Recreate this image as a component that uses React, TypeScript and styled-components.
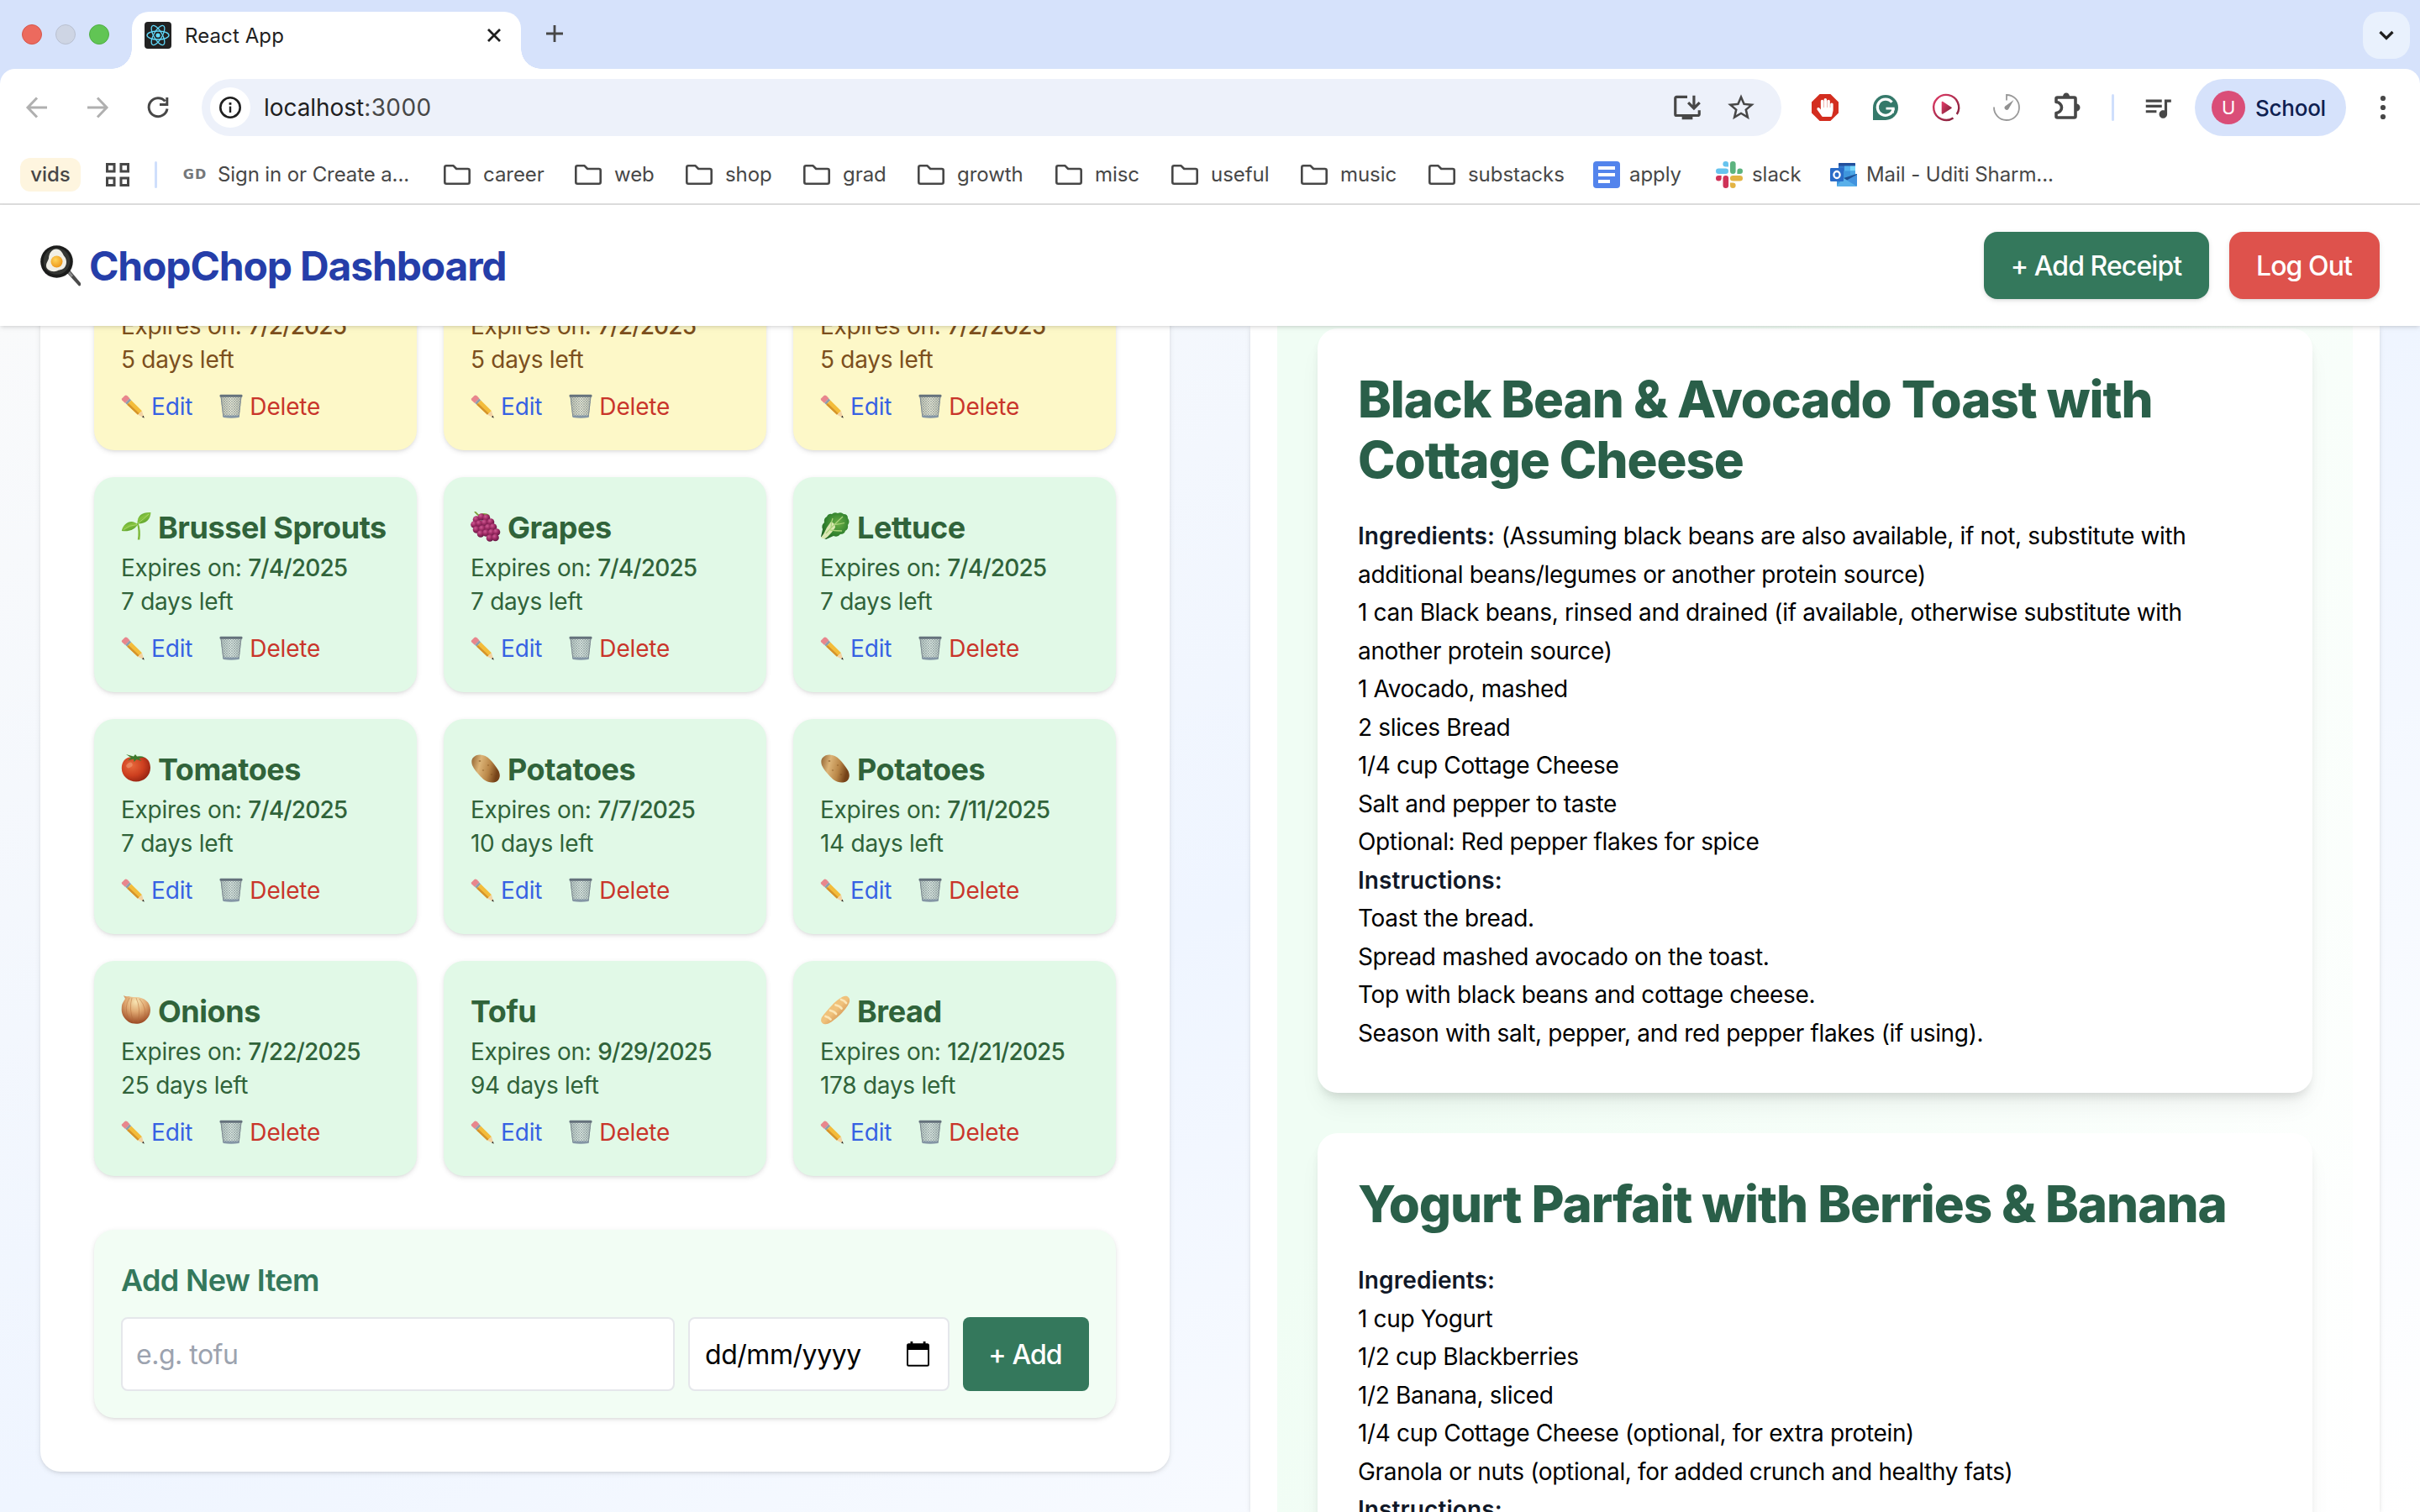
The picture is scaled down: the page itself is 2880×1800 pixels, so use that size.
import React from "react";
import styled, { createGlobalStyle } from "styled-components";
import { MdInstallDesktop, MdQueueMusic, MdStarBorder } from "react-icons/md";
import { FaHandPaper } from "react-icons/fa";

const GlobalStyle = createGlobalStyle`
  * { box-sizing: border-box; }
  body { margin: 0; background: #fff; }
  h1, h2, h3, p { margin: 0; }
  button, input { font-family: inherit; }
`;

const Window = styled.div`
  width: 2880px;
  height: 1800px;
  overflow: hidden;
  display: flex;
  flex-direction: column;
  background: #fff;
  font-family: "Inter", "Liberation Sans", sans-serif;
`;

/* ---------- Tab strip ---------- */

const TabStrip = styled.div`
  flex: none;
  height: 82px;
  display: flex;
  align-items: flex-start;
  padding: 14px 12px 0 26px;
  background: #d6e2fb;
`;

const TrafficLights = styled.div`
  display: flex;
  gap: 16px;
  margin-top: 15px;
`;

const Light = styled.span<{ $fill: string; $edge: string }>`
  width: 24px;
  height: 24px;
  border-radius: 50%;
  background: ${(p) => p.$fill};
  border: 1px solid ${(p) => p.$edge};
`;

const Tab = styled.div`
  position: relative;
  width: 463px;
  height: 68px;
  margin-left: 27px;
  padding: 0 16px 12px 15px;
  display: flex;
  align-items: center;
  border-radius: 20px 20px 0 0;
  background: #fff;

  &::before,
  &::after {
    content: "";
    position: absolute;
    bottom: 0;
    width: 24px;
    height: 24px;
  }
  &::before {
    left: -24px;
    background: radial-gradient(circle at 0 0, transparent 23.5px, #fff 24px);
  }
  &::after {
    right: -24px;
    background: radial-gradient(circle at 100% 0, transparent 23.5px, #fff 24px);
  }
`;

const TabTitle = styled.span`
  flex: 1;
  margin-left: 16px;
  font-size: 24px;
  letter-spacing: 0.1px;
  color: #1f1f1f;
`;

const NewTab = styled.div`
  display: flex;
  margin: 12px 0 0 26px;
`;

const TabSearch = styled.div`
  margin-left: auto;
  width: 56px;
  height: 56px;
  border-radius: 20px;
  background: #e9f1fd;
  display: flex;
  align-items: center;
  justify-content: center;
`;

/* ---------- Toolbar ---------- */

const ToolbarBackdrop = styled.div`
  flex: none;
  background: #d6e2fb;
`;

const Toolbar = styled.div`
  height: 92px;
  display: flex;
  align-items: center;
  padding: 0 24px;
  border-radius: 18px 18px 0 0;
  background: #fff;
`;

const IconGroup = styled.div`
  display: flex;
  gap: 32px;
  align-items: center;
`;

const AddressBar = styled.div`
  width: 1880px;
  height: 68px;
  margin: 0 32px;
  padding: 0 29px 0 10px;
  border-radius: 34px;
  background: #edf1fa;
  display: flex;
  align-items: center;
  color: #474747;
`;

const SiteInfo = styled.span`
  width: 48px;
  height: 48px;
  border-radius: 50%;
  background: #fff;
  display: flex;
  align-items: center;
  justify-content: center;
`;

const Url = styled.span`
  flex: 1;
  margin-left: 16px;
  font-size: 28px;
  letter-spacing: -0.05px;
  color: #1f1f1f;
`;

const Port = styled.span`
  color: #474747;
  letter-spacing: 0.4px;
`;

const AddressActions = styled.span`
  display: flex;
  gap: 26px;
`;

const Divider = styled.span<{ $margin: string }>`
  width: 3px;
  height: 32px;
  border-radius: 2px;
  margin: ${(p) => p.$margin};
  background: #cfdffc;
`;

const Profile = styled.div`
  width: 180px;
  height: 68px;
  margin: 0 24px 0 25px;
  padding-left: 20px;
  border-radius: 34px;
  background: #d6e2fb;
  display: flex;
  align-items: center;
  gap: 12px;
  font-size: 26px;
  font-weight: 500;
  letter-spacing: -0.25px;
  color: #0e2050;
`;

const Avatar = styled.span`
  width: 40px;
  height: 40px;
  border-radius: 50%;
  background: #da4e78;
  color: #fff;
  display: flex;
  align-items: center;
  justify-content: center;
  font-size: 22px;
  font-weight: 400;
`;

/* ---------- Bookmarks ---------- */

const BookmarksBar = styled.div`
  flex: none;
  height: 70px;
  display: flex;
  align-items: center;
  padding: 0 0 1px 24px;
  border-bottom: 2px solid #dfdfdf;
  color: #474747;
  font-size: 24px;
`;

const GroupChip = styled.span`
  width: 72px;
  height: 40px;
  border-radius: 12px;
  background: #fef5df;
  display: flex;
  align-items: center;
  justify-content: center;
  font-weight: 500;
  margin-right: 30px;
`;

const Bookmark = styled.span<{ $width: number; $gap?: number; $spacing?: number }>`
  width: ${(p) => p.$width}px;
  display: flex;
  align-items: center;
  gap: ${(p) => p.$gap ?? 15}px;
  letter-spacing: ${(p) => p.$spacing ?? -0.05}px;
  white-space: nowrap;
  svg { flex: none; }
`;

const Monogram = styled.span`
  width: 34px;
  font-family: "DejaVu Sans", sans-serif;
  font-size: 16px;
  font-weight: 700;
  letter-spacing: 1px;
  text-align: center;
  color: #74777a;
`;

/* ---------- App header ---------- */

const Header = styled.header`
  position: relative;
  z-index: 1;
  flex: none;
  height: 144px;
  display: flex;
  align-items: center;
  justify-content: space-between;
  padding: 0 48px;
  background: #fff;
  box-shadow: 0 2px 6px rgba(0, 0, 0, 0.1), 0 2px 4px -2px rgba(0, 0, 0, 0.12);
`;

const Brand = styled.h1`
  display: flex;
  align-items: center;
  gap: 10px;
  font-size: 48px;
  font-weight: 700;
  letter-spacing: -1.17px;
  color: #253ea9;
`;

const HeaderActions = styled.div`
  display: flex;
  gap: 24px;
`;

const HeaderButton = styled.button<{ $color: string; $width: number }>`
  width: ${(p) => p.$width}px;
  height: 80px;
  padding: 0 1px 0 0;
  border: 0;
  border-radius: 16px;
  background: ${(p) => p.$color};
  color: #fff;
  font-size: 32px;
  font-weight: 500;
  letter-spacing: -0.93px;
  box-shadow: 0 2px 6px rgba(0, 0, 0, 0.1), 0 2px 4px -2px rgba(0, 0, 0, 0.1);
`;

/* ---------- Page body ---------- */

const Main = styled.main`
  flex: 1;
  min-height: 0;
  overflow: hidden;
  display: flex;
  gap: 96px;
  padding: 0 48px;
  background: linear-gradient(to bottom right, #f9fafb, #eff5ff 50%, #ffffff);
`;

const PantryColumn = styled.section`
  width: 1344px;
  display: flex;
  flex-direction: column;
  justify-content: flex-end;
  padding-bottom: 48px;
`;

const Pantry = styled.div`
  flex: none;
  display: flex;
  flex-direction: column;
  gap: 64px;
  padding: 64px;
  border-radius: 24px;
  background: #fff;
  box-shadow: 0 2px 6px rgba(0, 0, 0, 0.1), 0 2px 4px -2px rgba(0, 0, 0, 0.1);
`;

const ItemGrid = styled.div`
  display: grid;
  grid-template-columns: repeat(3, 1fr);
  grid-auto-rows: 256px;
  gap: 32px;
`;

const ItemCard = styled.article<{ $soon?: boolean }>`
  display: flex;
  flex-direction: column;
  justify-content: flex-end;
  padding: 32px;
  border-radius: 24px;
  background: ${(p) => (p.$soon ? "#fdf8c8" : "#e1f9e7")};
  color: ${(p) => (p.$soon ? "#7c4f1d" : "#30633a")};
  box-shadow: 0 2px 6px rgba(0, 0, 0, 0.1), 0 2px 4px -2px rgba(0, 0, 0, 0.1);
`;

const ItemName = styled.h3`
  display: flex;
  align-items: center;
  gap: 8px;
  font-size: 36px;
  line-height: 56px;
  font-weight: 700;
  letter-spacing: -0.45px;
  white-space: nowrap;
  svg { margin-bottom: 3px; }
`;

const ItemLine = styled.p`
  font-size: 28px;
  line-height: 40px;
  letter-spacing: -0.27px;
  white-space: nowrap;
`;

const ExpiryDate = styled.span`
  font-weight: 500;
  letter-spacing: -0.85px;
`;

const ItemActions = styled.div`
  display: flex;
  gap: 32px;
  margin-top: 16px;
`;

const ItemAction = styled.span<{ $color: string }>`
  display: flex;
  align-items: center;
  gap: 8px;
  font-size: 28px;
  line-height: 40px;
  letter-spacing: -0.15px;
  color: ${(p) => p.$color};
  svg { margin-bottom: 1px; }
`;

const AddItem = styled.form`
  padding: 32px;
  border-radius: 24px;
  background: #f2fdf4;
  box-shadow: 0 2px 6px rgba(0, 0, 0, 0.1), 0 2px 4px -2px rgba(0, 0, 0, 0.1);
`;

const AddItemTitle = styled.h3`
  font-size: 36px;
  line-height: 56px;
  font-weight: 600;
  letter-spacing: -0.65px;
  color: #34785c;
  margin-bottom: 16px;
`;

const AddItemRow = styled.div`
  display: flex;
  gap: 16px;
  height: 88px;
`;

const NameInput = styled.input`
  flex: 1;
  min-width: 0;
  padding: 0 16px;
  border: 2px solid #e5e7eb;
  border-radius: 8px;
  background: #fff;
  font-size: 32px;
  letter-spacing: -0.5px;
  &::placeholder { color: #9ca3af; opacity: 1; }
`;

const DateInput = styled.div`
  width: 311px;
  padding: 0 22px 0 18px;
  border: 2px solid #e5e7eb;
  border-radius: 8px;
  background: #fff;
  display: flex;
  align-items: center;
  justify-content: space-between;
  font-size: 32px;
  letter-spacing: -0.45px;
  color: #000;
`;

const AddButton = styled.button`
  width: 150px;
  padding: 0 2px 0 0;
  border: 0;
  border-radius: 8px;
  background: #34785c;
  color: #fff;
  font-size: 32px;
  font-weight: 500;
  letter-spacing: -0.9px;
`;

/* ---------- Recipes ---------- */

const RecipePanel = styled.section`
  width: 1344px;
  padding: 0 32px;
  background: #fff;
  box-shadow: 0 2px 6px rgba(0, 0, 0, 0.1), 0 2px 4px -2px rgba(0, 0, 0, 0.1);
`;

const RecipeList = styled.div`
  height: 100%;
  overflow: hidden;
  display: flex;
  flex-direction: column;
  gap: 48px;
  padding: 3px 48px 0;
  background: linear-gradient(115deg, #f0fdf4 28%, #ffffff 100%);
`;

const RecipeCard = styled.article`
  flex: none;
  padding: 48px;
  border-radius: 24px;
  background: #fff;
  box-shadow: 0 20px 30px -6px rgba(0, 0, 0, 0.06), 0 8px 12px -4px rgba(0, 0, 0, 0.12);
`;

const RecipeTitle = styled.h2`
  font-size: 60px;
  line-height: 72px;
  font-weight: 800;
  letter-spacing: -1.06px;
  color: #2a5f49;
  margin-bottom: 33px;
`;

const RecipeLine = styled.p`
  font-size: 28px;
  line-height: 45.5px;
  letter-spacing: -0.34px;
  color: #000;
  white-space: nowrap;
`;

const RecipeLabel = styled.strong`
  font-weight: 600;
  letter-spacing: 0.1px;
  color: #111827;
`;

/* ---------- Chrome icons ---------- */

const ReactIcon = () => (
  <svg width="32" height="32" viewBox="0 0 32 32">
    <rect width="32" height="32" rx="4" fill="#222" />
    <g fill="none" stroke="#61dafb" strokeWidth="1.3">
      <ellipse cx="16" cy="16" rx="13" ry="5" />
      <ellipse cx="16" cy="16" rx="13" ry="5" transform="rotate(60 16 16)" />
      <ellipse cx="16" cy="16" rx="13" ry="5" transform="rotate(120 16 16)" />
    </g>
    <circle cx="16" cy="16" r="2.6" fill="#61dafb" />
  </svg>
);

const StrokeIcon = ({ d, size = 40, width = 3, color = "#474747" }: { d: string; size?: number; width?: number; color?: string }) => (
  <svg width={size} height={size} viewBox={`0 0 ${size} ${size}`} fill="none" stroke={color} strokeWidth={width}>
    <path d={d} />
  </svg>
);

const InfoIcon = () => (
  <svg width="28" height="28" viewBox="0 0 28 28">
    <circle cx="14" cy="14" r="11.7" fill="none" stroke="#1f1f1f" strokeWidth="2.6" />
    <rect x="12.8" y="12.6" width="2.4" height="7.4" fill="#1f1f1f" />
    <rect x="12.6" y="8" width="2.8" height="2.8" fill="#1f1f1f" />
  </svg>
);

const BlockSign = styled.span`
  width: 32px;
  height: 32px;
  margin: 0 4px;
  display: flex;
  align-items: center;
  justify-content: center;
  color: #fff;
  background: #d32d1f;
  clip-path: polygon(30% 0, 70% 0, 100% 30%, 100% 70%, 70% 100%, 30% 100%, 0 70%, 0 30%);
`;

const GrammarIcon = () => (
  <svg width="40" height="40" viewBox="0 0 40 40">
    <path d="M5 35V20a15 15 0 1 1 15 15z" fill="#35796a" />
    <path d="M27.5 13.8A9.6 9.6 0 1 0 29.4 21.4" fill="none" stroke="#fff" strokeWidth="3.2" />
    <path d="M20.5 21.2h10.2M28.4 21v5.8" fill="none" stroke="#fff" strokeWidth="2.8" />
  </svg>
);

const PlayIcon = () => (
  <svg width="40" height="40" viewBox="0 0 40 40">
    <path d="M28.5 32.4A15 15 0 1 1 32.8 28" stroke="url(#play)" strokeWidth="2.4" fill="none" />
    <path d="M15.500 13.500v13.500l10.500-6.700z" fill="url(#play)" stroke="url(#play)" strokeWidth="1.6" strokeLinejoin="round" />
  </svg>
);

const TimerIcon = () => (
  <svg width="40" height="40" viewBox="0 0 40 40">
    <path d="M5 19.5A15 15 0 1 0 20 5v6.5" fill="none" stroke="#999" strokeWidth="1.8" />
    <path d="M28.5 11 18.2 18.6a2.6 2.6 0 1 0 4 3.4z" fill="#919191" />
  </svg>
);

const PuzzleIcon = () => (
  <svg width="40" height="40" viewBox="0 0 40 40">
    <path
      d="M8.500 8h20q1.500 0 1.500 1.500v21q0 1.500-1.500 1.500h-20q-1.500 0-1.500-1.500V26.500a6.500 6.500 0 0 0 0-13V9.500Q7 8 8.500 8z"
      fill="none"
      stroke="#474747"
      strokeWidth="3.600"
      strokeLinejoin="round"
    />
    <path d="M15 7a4 4.500 0 0 1 8 0zM31 15.500a4.500 4.500 0 0 1 0 9z" fill="#474747" />
  </svg>
);

const KebabIcon = () => (
  <svg width="40" height="40" viewBox="0 0 40 40" fill="#474747">
    <circle cx="20" cy="9" r="3.100" />
    <circle cx="20" cy="20" r="3.100" />
    <circle cx="20" cy="31" r="3.100" />
  </svg>
);

const GridIcon = () => (
  <svg width="28" height="28" viewBox="0 0 28 28" fill="none" stroke="#474747" strokeWidth="3">
    <rect x="1.500" y="1.500" width="8.500" height="8.500" />
    <rect x="18" y="1.500" width="8.500" height="8.500" />
    <rect x="1.500" y="18" width="8.500" height="8.500" />
    <rect x="18" y="18" width="8.500" height="8.500" />
  </svg>
);

const FolderIcon = () => (
  <svg width="32" height="32" viewBox="0 0 32 32" fill="none" stroke="#474747" strokeWidth="2.600" strokeLinejoin="round">
    <path d="M3.300 5.300H11.600L15.200 9H28.700Q30.700 9 30.700 11V24.700Q30.700 26.700 28.700 26.700H3.300Q1.300 26.700 1.300 24.700V7.300Q1.300 5.300 3.300 5.300z" />
  </svg>
);

const DocsIcon = () => (
  <svg width="32" height="32" viewBox="0 0 32 32">
    <rect width="32" height="32" rx="4" fill="#5384ec" />
    <path d="M6 8h20M6 16h20M6 24h14" stroke="#fff" strokeWidth="3.800" />
  </svg>
);

const SlackIcon = () => (
  <svg width="32" height="32" viewBox="0 0 32 32">
    <g fill="#66c3ee">
      <path d="M15 6.600h-3.300A3.300 3.300 0 1 1 15 3.300z" />
      <rect y="8.500" width="15" height="6.600" rx="3.300" />
    </g>
    <g fill="#5cb37e">
      <path d="M25.400 15.100v-3.300a3.300 3.300 0 1 1 3.300 3.300z" />
      <rect x="17" width="6.600" height="15" rx="3.300" />
    </g>
    <g fill="#e3b343">
      <path d="M17 25.400h3.300a3.300 3.300 0 1 1-3.300 3.300z" />
      <rect x="17" y="17" width="15" height="6.600" rx="3.300" />
    </g>
    <g fill="#cf3358">
      <path d="M6.600 17v3.300A3.300 3.300 0 1 1 3.300 17z" />
      <rect x="8.500" y="17" width="6.600" height="15" rx="3.300" />
    </g>
  </svg>
);

const OutlookIcon = () => (
  <svg width="32" height="28" viewBox="0 0 32 28">
    <rect x="10" width="20" height="16" rx="1" fill="#3f95dc" />
    <rect x="10" width="20" height="4" rx="1" fill="#224f9c" />
    <rect x="10" y="3.500" width="7" height="6" fill="#3277cd" />
    <rect x="17" y="3.500" width="7" height="6" fill="#53b1ee" />
    <rect x="24" y="3.500" width="6" height="6" fill="#78d7fb" />
    <rect x="24" y="9.500" width="6" height="6" fill="#4aa5e6" />
    <path d="M8 15h10l14-2v14q0 1-1 1H9q-1 0-1-1z" fill="#3e97dd" />
    <path d="M32 13v2L20 21l-4-3z" fill="#1d4f93" />
    <path d="M16 18 32 28H9q-1 0-1-1z" fill="#59b0ea" />
    <path d="M20 20.500 32 13.800V27z" fill="#4292de" />
    <rect y="6" width="16" height="16" rx="1.200" fill="#2a6cc8" />
    <ellipse cx="8" cy="14" rx="3.600" ry="4" fill="none" stroke="#fff" strokeWidth="2.300" />
  </svg>
);

const CalendarIcon = () => (
  <svg width="27" height="30" viewBox="0 0 27 30">
    <path d="M2.500 3.200h22q1.500 0 1.500 1.500v22.500q0 1.500-1.500 1.500h-22Q1 28.700 1 27.200V4.700q0-1.500 1.500-1.500z" fill="none" stroke="#000" strokeWidth="2" />
    <path d="M1 3.200h25V10H1zM4.500 0h2.800v4H4.500zM19.700 0h2.800v4h-2.800z" fill="#000" />
  </svg>
);

/* ---------- Food and action pictograms ---------- */

const PaintDefs = () => (
  <svg width="0" height="0" style={{ flex: "none" }}>
    <defs>
      <linearGradient id="play" x1="0" y1="0" x2="1" y2="1">
        <stop offset="0" stopColor="#e23c68" />
        <stop offset="1" stopColor="#7c1f38" />
      </linearGradient>
      <linearGradient id="leaf" x1="0" y1="0" x2="0.6" y2="1">
        <stop offset="0" stopColor="#4f9a2c" />
        <stop offset="0.5" stopColor="#86c440" />
        <stop offset="1" stopColor="#5a9f2b" />
      </linearGradient>
      <radialGradient id="tomato" cx="0.35" cy="0.35" r="0.75">
        <stop offset="0" stopColor="#e8693c" />
        <stop offset="0.55" stopColor="#cd3f1f" />
        <stop offset="1" stopColor="#8d1f10" />
      </radialGradient>
      <radialGradient id="grape" cx="0.35" cy="0.3" r="0.75">
        <stop offset="0" stopColor="#cf5a93" />
        <stop offset="0.5" stopColor="#9c2a62" />
        <stop offset="1" stopColor="#5f1440" />
      </radialGradient>
      <linearGradient id="potato" x1="0" y1="0" x2="1" y2="0.25">
        <stop offset="0" stopColor="#8f6030" />
        <stop offset="0.35" stopColor="#dcb477" />
        <stop offset="0.7" stopColor="#b98647" />
        <stop offset="1" stopColor="#754218" />
      </linearGradient>
      <radialGradient id="onion" cx="0.5" cy="0.22" r="0.8">
        <stop offset="0" stopColor="#f8e6b4" />
        <stop offset="0.45" stopColor="#dfa770" />
        <stop offset="1" stopColor="#97441f" />
      </radialGradient>
      <linearGradient id="bread" x1="0" y1="0" x2="1" y2="1">
        <stop offset="0" stopColor="#f0bf72" />
        <stop offset="0.5" stopColor="#f0c27c" />
        <stop offset="1" stopColor="#b96a2b" />
      </linearGradient>
      <radialGradient id="lettuce" cx="0.6" cy="0.4" r="0.7">
        <stop offset="0" stopColor="#6aae45" />
        <stop offset="0.6" stopColor="#33842f" />
        <stop offset="1" stopColor="#1f5f22" />
      </radialGradient>
      <radialGradient id="yolk" cx="0.4" cy="0.35" r="0.7">
        <stop offset="0" stopColor="#ffd45a" />
        <stop offset="1" stopColor="#ec9416" />
      </radialGradient>
      <linearGradient id="can" x1="0" y1="0" x2="1" y2="0">
        <stop offset="0" stopColor="#8f9ba0" />
        <stop offset="0.5" stopColor="#d8dfdf" />
        <stop offset="1" stopColor="#8f9ba0" />
      </linearGradient>
      <pattern id="mesh" width="3" height="3" patternUnits="userSpaceOnUse">
        <path d="M0 0l3 3M3 0L0 3" stroke="#7d898e" strokeWidth="0.500" />
      </pattern>
    </defs>
  </svg>
);

const PanIcon = () => (
  <svg width="48" height="50" viewBox="0 0 48 50">
    <path d="M31 33l3.500-3L48 46q1 3-2 3.500z" fill="#4b4b4b" />
    <path d="M32 33l2-2 5 6-2 2z" fill="#8b8b8b" />
    <circle cx="19.500" cy="20.500" r="19.300" fill="#1b1c1b" />
    <circle cx="19.500" cy="20" r="15.800" fill="#343633" />
    <path d="M19 5.500c5 0 7 4 9 8 3 3 4 8 2 12-2 5-6 4-10 6-6 2-13-1-13-6 0-4 2-5 3-9 0-5 3-11 9-11z" fill="#f1efe6" />
    <circle cx="19.500" cy="20.500" r="7" fill="url(#yolk)" />
  </svg>
);

const SproutIcon = () => (
  <>
    <path d="M19 14q2.500 10 .8 19.500h2.600Q24 22 20.500 13.500z" fill="#7db83a" />
    <path d="M19.500 14.500C19 4 26 .5 35.500 1 35 10 29 15 19.500 14.500z" fill="url(#leaf)" />
    <path d="M20 15.500C14 8.500 3 12 .8 23 9 24 15 22.500 20 15.500z" fill="url(#leaf)" />
    <path d="M20 14Q27 9 33 3M19 15.500Q10 16 3 21.500" stroke="#b4de73" strokeWidth="0.800" fill="none" />
  </>
);

const grapes = [
  [7, 9], [13, 6], [19, 7], [4.500, 15], [10.500, 14], [17, 13], [24, 12], [7, 21], [14, 20], [21, 18.500], [27, 18], [12, 26], [18.500, 25], [25, 24.500], [31, 24], [23, 31], [29.500, 30.500],
];

const GrapesIcon = () => (
  <>
    <path d="M12 6Q8 4 5 0M10 5q6-4 12 0" stroke="#7ea23c" strokeWidth="2" fill="none" />
    {grapes.map(([x, y]) => (
      <circle key={`${x}-${y}`} cx={x} cy={y + 0.500} r="4.300" fill="url(#grape)" />
    ))}
  </>
);

const LettuceIcon = () => (
  <>
    <path d="M8 6q2-4 6-3 3-3 7-1 4-2 7 1 5 0 5 5 3 4 0 8 1 5-3 7-1 4-6 4-3 4-8 2l-9 4-6-3 2-9Q1 16 5 13q-1-5 3-7z" fill="url(#lettuce)" />
    <path d="M1 31q4-5 7-12l5-7q5 2 5 7-4 6-9 11-4 4-8 1z" fill="#dbe8b4" />
    <path d="M7 26Q14 18 27 6M13 19q0-6 2-11M17 15.500q7-.5 12-2M12 22q8 1 14 1" stroke="#a9d27a" strokeWidth="1.300" fill="none" />
  </>
);

const TomatoIcon = () => (
  <>
    <path d="M18 5C30 1 35 9 35 17c0 10-8 16.500-17 16.500S.8 27 .8 17.500C.8 8 7 2 18 5z" fill="url(#tomato)" />
    <ellipse cx="10" cy="14" rx="4" ry="2.800" fill="#f0a07c" opacity="0.550" transform="rotate(-35 10 14)" />
    <path d="M6 1q6 1.500 9 2.500L17 1l2 2.500q5-1 9 1-4 .2-6.500 1.500l3 3-6-2-3 3-.5-3.500-7 2 4-3.500z" fill="#3d7a2c" />
  </>
);

const PotatoIcon = () => (
  <>
    <path d="M3 5C8-1 18 1 23 7c4 4 7 8 10 13 4 7 1 14-6 14.500-8 .5-12-4-15-7C8 23 4 19 2 14c-1-3-1-7 1-9z" fill="url(#potato)" />
    <g fill="#84541f" opacity="0.600">
      <ellipse cx="11" cy="9" rx="1.400" ry="0.900" />
      <ellipse cx="21" cy="14" rx="1.200" ry="0.800" />
      <ellipse cx="15" cy="20" rx="1.200" ry="0.800" />
      <ellipse cx="25" cy="25" rx="1.300" ry="0.900" />
    </g>
  </>
);

const OnionIcon = () => (
  <>
    <path d="M3 0q3 2 6 1 3 1 6 1c12-1 20 6 20 15 0 8-5 13-10 15.500-5 2-12 1.500-16-1C3 27 0 22 .8 14 1 9 4 6 5 4z" fill="url(#onion)" />
    <path d="M10 3Q3 14 9 28M13 3q-4 13 2 29M18 3q6 13 2 29M22 4q10 12 5 25" stroke="#b26a38" strokeWidth="0.700" fill="none" opacity="0.650" />
  </>
);

const BreadIcon = () => (
  <>
    <path d="M2 26C8 18 18 6 27 1.500c5-2 9 1 8 6C33 15 19 29 10 33.500 4 36-1 32 2 26z" fill="url(#bread)" />
    <g stroke="#fbe6b7" strokeWidth="2.800" strokeLinecap="round" fill="none">
      <path d="M25 5q4 1 6 4M18.500 11.500q5 1 7 4M12 18q5 1 7 4M6.500 25q4 1 6 3.500" />
    </g>
  </>
);

const PencilIcon = () => (
  <svg width="28" height="28" viewBox="0 0 28 28">
    <path d="M1 4.500 4.500 1q1.500-1 3 .3l3 3L5 10 1.300 6.500Q.3 5.500 1 4.500z" fill="#e8868d" />
    <path d="M5.200 9.800l5-5.200 2 2-5 5.200z" fill="#8f9cab" />
    <path d="M7.200 11.800l5-5.200L25 19.200l-5 4.600z" fill="#f3bc3a" />
    <path d="M7.200 11.800l1.700-1.800 12.800 12.300-1.700 1.500z" fill="#d4922b" />
    <path d="M20 23.800l5-4.600L27.500 27.500z" fill="#f2d3a4" />
    <path d="M25 26.300l1.800-1.500.9 2.900z" fill="#2b2b2b" />
  </svg>
);

const BinIcon = () => (
  <svg width="28" height="29" viewBox="0 0 28 29">
    <path d="M1.500 2.500h25L23.500 28h-19z" fill="url(#can)" opacity="0.550" />
    <path d="M1.500 2.500h25L23.500 28h-19z" fill="url(#mesh)" />
    <path d="M2 3l2.800 24M26 3l-2.800 24" stroke="#7f8b92" strokeWidth="1" />
    <rect x="0.500" y="0.800" width="27" height="3" rx="1.200" fill="#65727c" />
    <path d="M4.300 25.500h19.400l-.5 2.500q-9 1.500-18.400 0z" fill="#8496a5" />
  </svg>
);

/* ---------- Data ---------- */

const folders: [string, number][] = [
  ["career", 156],
  ["web", 132],
  ["shop", 140],
  ["grad", 136],
  ["growth", 164],
  ["misc", 138],
  ["useful", 154],
  ["music", 152],
  ["substacks", 196],
];

type Item = { icon?: React.ReactNode; name?: string; date: string; days: number; soon?: boolean };

const items: Item[] = [
  { date: "7/2/2025", days: 5, soon: true },
  { date: "7/2/2025", days: 5, soon: true },
  { date: "7/2/2025", days: 5, soon: true },
  { icon: <SproutIcon />, name: "Brussel Sprouts", date: "7/4/2025", days: 7 },
  { icon: <GrapesIcon />, name: "Grapes", date: "7/4/2025", days: 7 },
  { icon: <LettuceIcon />, name: "Lettuce", date: "7/4/2025", days: 7 },
  { icon: <TomatoIcon />, name: "Tomatoes", date: "7/4/2025", days: 7 },
  { icon: <PotatoIcon />, name: "Potatoes", date: "7/7/2025", days: 10 },
  { icon: <PotatoIcon />, name: "Potatoes", date: "7/11/2025", days: 14 },
  { icon: <OnionIcon />, name: "Onions", date: "7/22/2025", days: 25 },
  { name: "Tofu", date: "9/29/2025", days: 94 },
  { icon: <BreadIcon />, name: "Bread", date: "12/21/2025", days: 178 },
];

type Line = { label?: string; text?: string };

const recipes: { title: string; lines: Line[] }[] = [
  {
    title: "Black Bean & Avocado Toast with Cottage Cheese",
    lines: [
      { label: "Ingredients:", text: " (Assuming black beans are also available, if not, substitute with" },
      { text: "additional beans/legumes or another protein source)" },
      { text: "1 can Black beans, rinsed and drained (if available, otherwise substitute with" },
      { text: "another protein source)" },
      { text: "1 Avocado, mashed" },
      { text: "2 slices Bread" },
      { text: "1/4 cup Cottage Cheese" },
      { text: "Salt and pepper to taste" },
      { text: "Optional: Red pepper flakes for spice" },
      { label: "Instructions:" },
      { text: "Toast the bread." },
      { text: "Spread mashed avocado on the toast." },
      { text: "Top with black beans and cottage cheese." },
      { text: "Season with salt, pepper, and red pepper flakes (if using)." },
    ],
  },
  {
    title: "Yogurt Parfait with Berries & Banana",
    lines: [
      { label: "Ingredients:" },
      { text: "1 cup Yogurt" },
      { text: "1/2 cup Blackberries" },
      { text: "1/2 Banana, sliced" },
      { text: "1/4 cup Cottage Cheese (optional, for extra protein)" },
      { text: "Granola or nuts (optional, for added crunch and healthy fats)" },
      { label: "Instructions:" },
    ],
  },
];

const PantryItem = ({ icon, name, date, days, soon }: Item) => (
  <ItemCard $soon={soon}>
    {name && (
      <ItemName>
        {icon && (
          <svg width="36" height="36" viewBox="0 0 36 36">
            {icon}
          </svg>
        )}
        {name}
      </ItemName>
    )}
    <ItemLine>
      Expires on: <ExpiryDate>{date}</ExpiryDate>
    </ItemLine>
    <ItemLine>{days} days left</ItemLine>
    <ItemActions>
      <ItemAction $color="#3662e3">
        <PencilIcon />
        Edit
      </ItemAction>
      <ItemAction $color="#c9352b">
        <BinIcon />
        Delete
      </ItemAction>
    </ItemActions>
  </ItemCard>
);

export default function App() {
  return (
    <Window>
      <GlobalStyle />
      <PaintDefs />
      <TabStrip>
        <TrafficLights>
          <Light $fill="#ec6a5e" $edge="#d6564b" />
          <Light $fill="#ced5e4" $edge="#b9c0d0" />
          <Light $fill="#61c554" $edge="#4faf43" />
        </TrafficLights>
        <Tab>
          <ReactIcon />
          <TabTitle>React App</TabTitle>
          <StrokeIcon size={32} color="#1f1f1f" width={2.8} d="M9 9l14 14M23 9L9 23" />
        </Tab>
        <NewTab>
          <StrokeIcon size={28} width={2.8} d="M14 4v20M4 14h20" />
        </NewTab>
        <TabSearch>
          <StrokeIcon size={24} color="#1f1f1f" width={3.2} d="M4.500 8l7.500 7.500L19.500 8" />
        </TabSearch>
      </TabStrip>

      <ToolbarBackdrop>
        <Toolbar>
          <IconGroup>
            <StrokeIcon color="#b0b0b0" d="M32 20H9.500M20 8.500L9 20l11 11.500" />
            <StrokeIcon color="#b0b0b0" d="M8 20h22.500M20 8.500L31 20 20 31.500" />
            <StrokeIcon d="M31 21.500A11 11 0 1 1 28.500 12.500M30.800 8v8.500H22" />
          </IconGroup>
          <AddressBar>
            <SiteInfo>
              <InfoIcon />
            </SiteInfo>
            <Url>
              localhost<Port>:3000</Port>
            </Url>
            <AddressActions>
              <MdInstallDesktop size={38} />
              <MdStarBorder size={38} />
            </AddressActions>
          </AddressBar>
          <IconGroup>
            <BlockSign>
              <FaHandPaper size={22} />
            </BlockSign>
            <GrammarIcon />
            <PlayIcon />
            <TimerIcon />
            <PuzzleIcon />
          </IconGroup>
          <Divider $margin="0 33px 0 33px" />
          <MdQueueMusic size={38} color="#474747" />
          <Profile>
            <Avatar>U</Avatar>
            School
          </Profile>
          <KebabIcon />
        </Toolbar>
      </ToolbarBackdrop>

      <BookmarksBar>
        <GroupChip>vids</GroupChip>
        <GridIcon />
        <Divider $margin="0 28px 0 30px" />
        <Bookmark $width={313} $gap={10} $spacing={-0.1}>
          <Monogram>GD</Monogram>Sign in or Create a...
        </Bookmark>
        {folders.map(([name, width]) => (
          <Bookmark key={name} $width={width}>
            <FolderIcon />
            {name}
          </Bookmark>
        ))}
        <Bookmark $width={146} $gap={11}>
          <DocsIcon />
          apply
        </Bookmark>
        <Bookmark $width={136} $gap={11}>
          <SlackIcon />
          slack
        </Bookmark>
        <Bookmark $width={280} $gap={11} $spacing={-0.07}>
          <OutlookIcon />
          Mail - Uditi Sharm...
        </Bookmark>
      </BookmarksBar>

      <Header>
        <Brand>
          <PanIcon />
          ChopChop Dashboard
        </Brand>
        <HeaderActions>
          <HeaderButton type="button" $color="#34785c" $width={268}>+ Add Receipt</HeaderButton>
          <HeaderButton type="button" $color="#de524c" $width={179}>Log Out</HeaderButton>
        </HeaderActions>
      </Header>

      <Main>
        <PantryColumn>
          <Pantry>
            <ItemGrid>
              {items.map((item, i) => (
                <PantryItem key={i} {...item} />
              ))}
            </ItemGrid>
            <AddItem>
              <AddItemTitle>Add New Item</AddItemTitle>
              <AddItemRow>
                <NameInput placeholder="e.g. tofu" />
                <DateInput>
                  dd/mm/yyyy
                  <CalendarIcon />
                </DateInput>
                <AddButton type="button">+ Add</AddButton>
              </AddItemRow>
            </AddItem>
          </Pantry>
        </PantryColumn>

        <RecipePanel>
          <RecipeList>
            {recipes.map((recipe) => (
              <RecipeCard key={recipe.title}>
                <RecipeTitle>{recipe.title}</RecipeTitle>
                {recipe.lines.map((line, i) => (
                  <RecipeLine key={i}>
                    {line.label && <RecipeLabel>{line.label}</RecipeLabel>}
                    {line.text}
                  </RecipeLine>
                ))}
              </RecipeCard>
            ))}
          </RecipeList>
        </RecipePanel>
      </Main>
    </Window>
  );
}
